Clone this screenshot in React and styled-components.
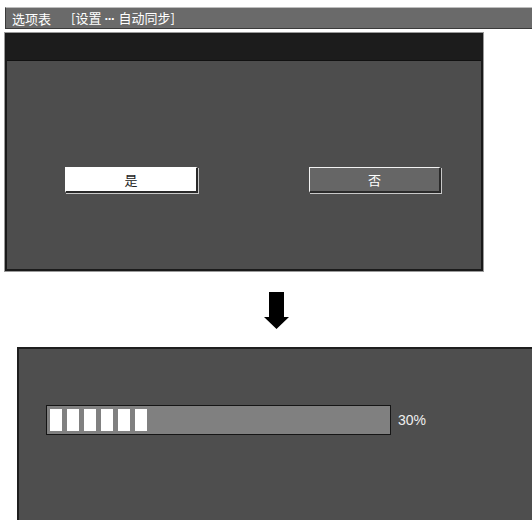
import React from 'react';
import styled, { createGlobalStyle } from 'styled-components';

const GlobalStyle = createGlobalStyle`
  html, body {
    margin: 0;
    padding: 0;
    background: #ffffff;
    overflow: hidden;
  }
  body {
    font-family: "Liberation Sans", "Noto Sans CJK SC", sans-serif;
  }
`;

const Page = styled.div`
  width: 532px;
  height: 520px;
  overflow: hidden;
  display: flex;
  flex-direction: column;
`;

const MenuBar = styled.div`
  margin: 7px -4px 0 5px;
  height: 20px;
  background: #6a6a6a;
  border-top: 1px solid #bdbdbd;
  border-bottom: 1px solid #3a3a3a;
  border-left: 1px solid #3a3a3a;
  display: flex;
  align-items: center;
  gap: 20px;
  padding-left: 6px;
  color: #ffffff;
  font-size: 13px;
  font-family: "Noto Sans CJK SC", sans-serif;
  line-height: 1;
`;

const Crumb = styled.span`
  font-size: 13px;
`;

const Dots = styled.span`
  font-family: "Liberation Sans", sans-serif;
  font-weight: bold;
  letter-spacing: -1px;
  margin: 0 4px 0 3px;
`;

const Dialog = styled.div`
  margin: 4px 0 0 5px;
  width: 474px;
  height: 234px;
  border: 2px solid #1a1a1a;
  box-shadow: 0 0 0 1px #9a9a9a;
  background: #4d4d4d;
  display: flex;
  flex-direction: column;
`;

const DialogHead = styled.div`
  height: 25px;
  background: #1c1c1c;
  border-bottom: 1px solid #111;
`;

const DialogBody = styled.div`
  flex: 1;
  display: flex;
  align-items: flex-start;
  gap: 111px;
  padding: 106px 0 0 58px;
`;

const Button = styled.div`
  box-sizing: border-box;
  width: ${p => p.$w}px;
  height: 26px;
  display: flex;
  align-items: center;
  justify-content: center;
  font-family: "Noto Sans CJK SC", sans-serif;
  font-size: 13px;
  background: ${p => (p.$active ? '#ffffff' : '#666666')};
  color: ${p => (p.$active ? '#222222' : '#ffffff')};
  border-top: 1px solid ${p => (p.$active ? '#ffffff' : '#f2f2f2')};
  border-left: 1px solid ${p => (p.$active ? '#ffffff' : '#f2f2f2')};
  border-right: 2px solid #2a2a2a;
  border-bottom: 2px solid #2a2a2a;
  box-shadow: 1px 1px 0 #c8c8c8;
`;

const ArrowRow = styled.div`
  height: 76px;
  display: flex;
  align-items: flex-start;
  padding: 21px 0 0 264px;
  box-sizing: border-box;
`;

const Progress = styled.div`
  margin: 0 -6px 0 17px;
  flex: 1;
  background: #4e4e4e;
  border-top: 2px solid #1e1e1e;
  border-left: 2px solid #1e1e1e;
  display: flex;
  align-items: flex-start;
  gap: 8px;
  padding: 56px 0 0 27px;
`;

const Track = styled.div`
  box-sizing: border-box;
  width: 345px;
  height: 30px;
  background: #808080;
  border: 1px solid #151515;
  display: flex;
  align-items: center;
  gap: 5px;
  padding-left: 3px;
`;

const Block = styled.div`
  width: 12px;
  height: 22px;
  background: #ffffff;
`;

const Percent = styled.span`
  color: #eeeeee;
  font-size: 14px;
  line-height: 30px;
  margin-left: -1px;
`;

const DownArrow = () => (
  <svg width="25" height="37" viewBox="0 0 25 37">
    <path d="M5 0 H20 V25 H25 L12.5 37 L0 25 H5 Z" fill="#000" />
  </svg>
);

export default function App() {
  const blocks = 6;
  return (
    <>
      <GlobalStyle />
      <Page>
        <MenuBar>
          <span>选项表</span>
          <Crumb>[设置<Dots>···</Dots>自动同步]</Crumb>
        </MenuBar>
        <Dialog>
          <DialogHead />
          <DialogBody>
            <Button $active $w={133}>是</Button>
            <Button $w={132}>否</Button>
          </DialogBody>
        </Dialog>
        <ArrowRow>
          <DownArrow />
        </ArrowRow>
        <Progress>
          <Track>
            {Array.from({ length: blocks }).map((_, i) => (
              <Block key={i} />
            ))}
          </Track>
          <Percent>30%</Percent>
        </Progress>
      </Page>
    </>
  );
}
